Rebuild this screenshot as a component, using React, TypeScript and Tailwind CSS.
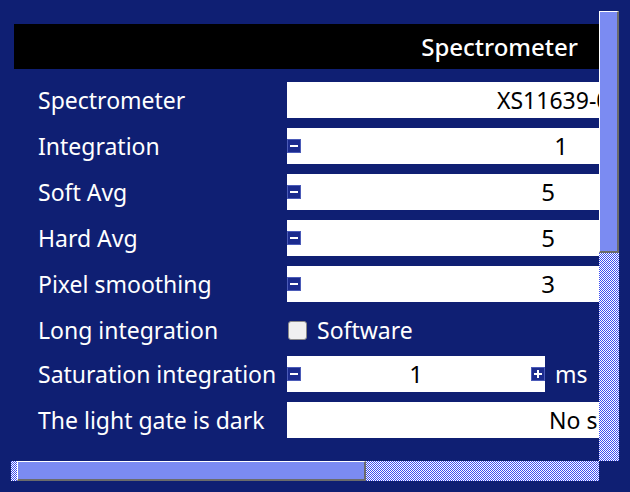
import React from "react";

const font = { fontFamily: '"Noto Sans", "DejaVu Sans", sans-serif' };

function Btn({ plus }: { plus?: boolean }) {
  return (
    <div className="w-[14px] h-[14px] bg-[#1b2b8e] border border-[#4b5bb8] flex items-center justify-center">
      <div className="relative w-[8px] h-[8px]">
        <div className="absolute left-0 right-0 top-[3px] h-[2px] bg-white" />
        {plus && <div className="absolute top-0 bottom-0 left-[3px] w-[2px] bg-white" />}
      </div>
    </div>
  );
}

function Checker({ id }: { id: string }) {
  return (
    <svg className="absolute inset-0 w-full h-full" shapeRendering="crispEdges">
      <defs>
        <pattern id={id} width="2" height="2" patternUnits="userSpaceOnUse">
          <rect width="2" height="2" fill="#ffffff" />
          <rect width="1" height="1" fill="#3d4ef0" />
          <rect x="1" y="1" width="1" height="1" fill="#3d4ef0" />
        </pattern>
      </defs>
      <rect width="100%" height="100%" fill={`url(#${id})`} />
    </svg>
  );
}

function Label({ children }: { children: React.ReactNode }) {
  return (
    <div className="w-[273px] shrink-0 pl-[24px] text-white text-[23px] leading-none whitespace-nowrap">
      {children}
    </div>
  );
}

function NumInput({ width, value }: { width: string; value: string }) {
  return (
    <div className={`relative h-[36px] shrink-0 bg-white flex items-center justify-center ${width}`}>
      <div className="absolute left-0 top-[11px]">
        <Btn />
      </div>
      <span className="text-black text-[24px] leading-none">{value}</span>
    </div>
  );
}

export default function App() {
  return (
    <div className="w-[630px] h-[492px] bg-[#0f1f73] p-[11px]" style={font}>
      <div className="grid grid-cols-[588px_20px] grid-rows-[450px_20px]">
        <div className="overflow-hidden">
          <div className="w-[900px] pl-[3px] pt-[13px]">
            <div className="w-[620px] h-[45px] bg-black flex items-center justify-end pr-[56px]">
              <span className="text-white text-[24px] font-medium leading-none">Spectrometer</span>
            </div>
            <div className="mt-[13px] flex flex-col gap-[10px]">
              <div className="flex items-center h-[36px]">
                <Label>Spectrometer</Label>
                <div className="h-[36px] w-[560px] shrink-0 bg-white flex items-center pl-[210px]">
                  <span className="text-black text-[23px] leading-none whitespace-nowrap">XS11639-01</span>
                </div>
              </div>
              <div className="flex items-center h-[36px]">
                <Label>Integration</Label>
                <NumInput width="w-[548px]" value="1" />
              </div>
              <div className="flex items-center h-[36px]">
                <Label>Soft Avg</Label>
                <NumInput width="w-[522px]" value="5" />
              </div>
              <div className="flex items-center h-[36px]">
                <Label>Hard Avg</Label>
                <NumInput width="w-[522px]" value="5" />
              </div>
              <div className="flex items-center h-[36px]">
                <Label>Pixel smoothing</Label>
                <NumInput width="w-[522px]" value="3" />
              </div>
              <div className="flex items-center h-[34px] pt-[2px]">
                <Label>Long integration</Label>
                <div className="flex items-center">
                  <div className="w-[19px] h-[19px] ml-[1px] rounded-[3px] bg-[#f0f0f0] border border-[#8a8a8a]" />
                  <span className="ml-[10px] text-white text-[23px] leading-none">Software</span>
                </div>
              </div>
              <div className="flex items-center h-[36px]">
                <Label>Saturation integration</Label>
                <div className="relative h-[36px] w-[258px] shrink-0 bg-white flex items-center justify-center">
                  <div className="absolute left-0 top-[11px]">
                    <Btn />
                  </div>
                  <span className="text-black text-[24px] leading-none">1</span>
                  <div className="absolute right-0 top-[11px]">
                    <Btn plus />
                  </div>
                </div>
                <span className="ml-[10px] text-white text-[23px] leading-none">ms</span>
              </div>
              <div className="flex items-center h-[36px]">
                <Label>The light gate is dark</Label>
                <div className="h-[36px] w-[560px] shrink-0 bg-white flex items-center pl-[262px]">
                  <span className="text-black text-[23px] leading-none whitespace-nowrap">No shutter</span>
                </div>
              </div>
            </div>
          </div>
        </div>
        {/* vertical scrollbar */}
        <div className="relative flex flex-col">
          <Checker id="chk-v" />
          <div className="relative h-[242px] bg-[#7b8bf2] border-t border-l border-t-white border-l-white border-r-2 border-b-2 border-r-[#6b6b6b] border-b-[#6b6b6b]" />
        </div>
        {/* horizontal scrollbar */}
        <div className="relative flex pl-[6px]">
          <Checker id="chk-h" />
          <div className="relative w-[349px] h-[20px] bg-[#7b8bf2] border-t border-l border-t-white border-l-white border-r-2 border-b-2 border-r-[#6b6b6b] border-b-[#6b6b6b]" />
        </div>
        <div />
      </div>
    </div>
  );
}
